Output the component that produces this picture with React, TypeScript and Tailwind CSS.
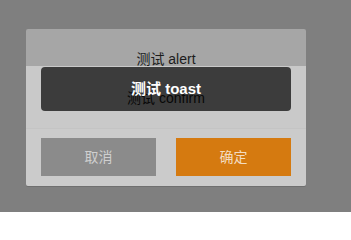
import React from "react";

export default function App() {
  return (
    <div
      className="w-[351px] h-[212px] bg-[#7f7f7f] pt-[29px] pl-[26px]"
      style={{ fontFamily: '"Liberation Sans", "Noto Sans CJK SC", sans-serif' }}
    >
      <div className="relative w-[280px] rounded-[2px] overflow-hidden shadow-[0_1px_0_#6f6f6f]">
        <div className="h-[37px] bg-[#a6a6a6] pt-[20px] text-center text-[14px] leading-[20px] text-[#1c1c1c]">
          测试 alert
        </div>
        <div className="h-[62px] bg-[#c9c9c9] pt-[22px] text-center text-[14px] leading-[20px] text-[#1a1a1a]">
          测试 confirm
        </div>
        <div className="h-[58px] bg-[#cbcbcb] border-t border-[#c4c4c4] pt-[9px] px-[15px] flex gap-[20px]">
          <div className="w-[115px] h-[38px] bg-[#8b8b8b] flex items-center justify-center text-[14px] text-[#cfcfcf]">
            取消
          </div>
          <div className="w-[115px] h-[38px] bg-[#d57a10] flex items-center justify-center text-[14px] text-[#f3dcc0]">
            确定
          </div>
        </div>
        <div className="absolute left-[15px] top-[38px] w-[250px] h-[44px] rounded-[4px] bg-black/70 flex items-center justify-center text-[15px] font-bold text-white">
          测试 toast
        </div>
      </div>
    </div>
  );
}
